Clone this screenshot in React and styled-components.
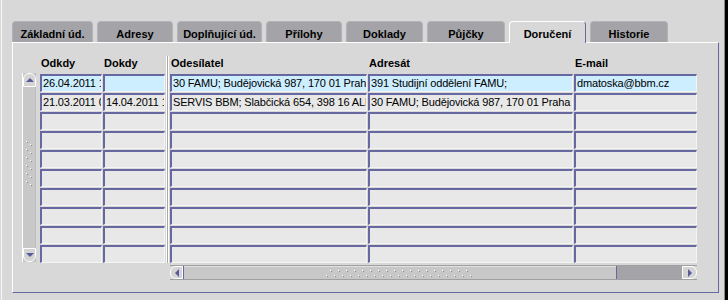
import React from 'react';
import styled, { createGlobalStyle, css } from 'styled-components';

// palette taken from the Oracle-forms style screen
const BG = '#d8d8d8';
const PURPLE = '#6868a0';
const FIELD = '#e8e8e8';
const CURRENT = '#cceeff';
const TAB_OFF = '#a4a4a8';

const GlobalStyle = createGlobalStyle`
  html, body {
    margin: 0;
    padding: 0;
    background: ${BG};
  }
  body {
    font-family: 'Liberation Sans', Arial, sans-serif;
    color: #000;
  }
`;

const Frame = styled.div`
  width: 728px;
  height: 300px;
  box-sizing: border-box;
  padding: 21px 0 0 12px;
  background: ${BG};
  overflow: hidden;
  box-shadow: inset 1px 0 0 ${BG}, inset 2px 0 0 #f8f8f8, inset -3px 0 0 #000,
    inset -4px 0 0 #8a8a8a;
`;

const TabBar = styled.div`
  display: flex;
  align-items: flex-start;
  gap: 4px;
  height: 21px;
`;

const Tab = styled.div`
  width: ${(p) => p.$w}px;
  height: 21px;
  box-sizing: border-box;
  display: flex;
  align-items: center;
  justify-content: center;
  padding-top: 3px;
  font-size: 11px;
  font-weight: bold;
  white-space: nowrap;
  background: ${TAB_OFF};
  border: 1px solid #b4b4b8;
  border-bottom: none;
  border-radius: 4px 4px 0 0;

  ${(p) =>
    p.$active &&
    css`
      position: relative;
      z-index: 1;
      height: 22px;
      margin-bottom: -1px;
      background: ${BG};
      border-top: 1px solid #fff;
      border-left: 1px solid #fff;
      border-right: 1px solid ${PURPLE};
    `}
`;

const Panel = styled.div`
  width: 707px;
  height: 251px;
  box-sizing: border-box;
  border-top: 1px solid #fff;
  border-left: 1px solid #fff;
  border-right: 1px solid ${PURPLE};
  border-bottom: 1px solid ${PURPLE};
  padding: 13px 0 0 9px;
  display: flex;
  align-items: flex-start;
`;

const VScroll = styled.div`
  width: 14px;
  height: 189px;
  margin-top: 17px;
  box-sizing: border-box;
  display: flex;
  flex-direction: column;
  background: #c8c8c8;
  border-left: 1px solid #fff;
  border-right: 1px solid #bcbcbc;
`;

const ScrollBtn = styled.div`
  flex: 0 0 auto;
  width: ${(p) => (p.$horizontal ? p.$size : 13)}px;
  height: ${(p) => (p.$horizontal ? 13 : p.$size)}px;
  box-sizing: border-box;
  display: flex;
  align-items: center;
  justify-content: center;
  background: #d4d4d4;
  border: 1px solid #fff;
  border-radius: ${(p) => p.$radius};
`;

const VTrack = styled.div`
  flex: 1;
  display: flex;
  align-items: center;
  justify-content: center;
  padding-bottom: 8px;
`;

const Block = styled.div`
  display: flex;
  flex-direction: column;
  margin-left: ${(p) => p.$offset || 0}px;
`;

const HeaderRow = styled.div`
  display: flex;
  height: 18px;
`;

const HeaderCell = styled.div`
  width: ${(p) => p.$w}px;
  margin-left: ${(p) => p.$gap || 0}px;
  padding-left: 1px;
  box-sizing: border-box;
  font-size: 11px;
  font-weight: bold;
  line-height: 14px;
  white-space: nowrap;
`;

const Row = styled.div`
  display: flex;
  height: 18px;
  margin-bottom: 1px;
`;

const Cell = styled.div`
  width: ${(p) => p.$w}px;
  margin-left: ${(p) => p.$gap || 0}px;
  height: 18px;
  box-sizing: border-box;
  padding-left: 1px;
  border-top: 2px solid ${PURPLE};
  border-left: 2px solid ${PURPLE};
  border-right: 1px solid #f4f4f4;
  border-bottom: 1px solid #f4f4f4;
  background: ${(p) => (p.$current ? CURRENT : FIELD)};
  font-size: 11px;
  letter-spacing: -0.15px;
  line-height: 15px;
  white-space: nowrap;
  overflow: hidden;
`;

const Divider = styled.div`
  width: 5px;
  height: 207px;
  background: linear-gradient(
    to right,
    transparent 0 1px,
    #fff 1px 2px,
    #a8a8a8 2px 3px,
    #fff 3px 4px,
    transparent 4px
  );
`;

const HScroll = styled.div`
  margin-top: 1px;
  height: 15px;
  box-sizing: border-box;
  display: flex;
  border-top: 1px solid #a0a0a0;
  border-bottom: 1px solid #a0a0a0;
`;

const Thumb = styled.div`
  width: 434px;
  box-sizing: border-box;
  display: flex;
  align-items: center;
  justify-content: center;
  background: #c8c8c8;
  border-left: 1px solid ${PURPLE};
  border-right: 1px solid ${PURPLE};
  box-shadow: inset 0 1px 0 #e0e0e0;
`;

const HTrack = styled.div`
  flex: 1;
  background: ${TAB_OFF};
`;

const tabs = [
  { label: 'Základní úd.', w: 81 },
  { label: 'Adresy', w: 76 },
  { label: 'Doplňující úd.', w: 85 },
  { label: 'Přílohy', w: 76 },
  { label: 'Doklady', w: 77 },
  { label: 'Půjčky', w: 78 },
  { label: 'Doručení', w: 77, active: true },
  { label: 'Historie', w: 78 },
];

const leftCols = [
  { key: 'from', label: 'Odkdy', w: 62 },
  { key: 'to', label: 'Dokdy', w: 62, gap: 1 },
];

const rightCols = [
  { key: 'sender', label: 'Odesílatel', w: 197 },
  { key: 'recipient', label: 'Adresát', w: 205, gap: 1 },
  { key: 'email', label: 'E-mail', w: 123, gap: 1 },
];

const records = [
  {
    from: '26.04.2011 10:32',
    to: '',
    sender: '30 FAMU; Budějovická 987, 170 01 Praha 4',
    recipient: '391 Studijní oddělení FAMU;',
    email: 'dmatoska@bbm.cz',
  },
  {
    from: '21.03.2011 09:15',
    to: '14.04.2011 12:00',
    sender: 'SERVIS BBM; Slabčická 654, 398 16 ALBRECHTICE',
    recipient: '30 FAMU; Budějovická 987, 170 01 Praha',
    email: '',
  },
];

const ROWS = 10;
const rows = Array.from({ length: ROWS }, (_, i) => records[i] || {});

const Arrow = ({ dir }) => {
  const points = {
    up: '1,6 5,2 9,6',
    down: '1,2 5,6 9,2',
    left: '6,1 2,5 6,9',
    right: '2,1 6,5 2,9',
  }[dir];
  const vertical = dir === 'up' || dir === 'down';
  return (
    <svg width={vertical ? 10 : 8} height={vertical ? 8 : 10} viewBox={vertical ? '0 0 10 8' : '0 0 8 10'}>
      <polygon points={points} fill="#5a5a9a" />
    </svg>
  );
};

const Dot = ({ x, y }) => (
  <>
    <rect x={x + 1} y={y + 1} width="1" height="1" fill="#8c8c8c" />
    <rect x={x} y={y} width="1" height="1" fill="#fff" />
  </>
);

const HGrip = () => (
  <svg width="148" height="10">
    {Array.from({ length: 18 }, (_, k) => (
      <Dot key={'a' + k} x={4 + k * 8} y={2} />
    ))}
    {Array.from({ length: 19 }, (_, k) => (
      <Dot key={'b' + k} x={k * 8} y={7} />
    ))}
  </svg>
);

const VGrip = () => (
  <svg width="8" height="46">
    {Array.from({ length: 6 }, (_, k) => (
      <Dot key={'a' + k} x={1} y={k * 8} />
    ))}
    {Array.from({ length: 6 }, (_, k) => (
      <Dot key={'b' + k} x={5} y={3 + k * 8} />
    ))}
  </svg>
);

const Columns = ({ cols }) => (
  <>
    <HeaderRow>
      {cols.map((c) => (
        <HeaderCell key={c.key} $w={c.w} $gap={c.gap}>
          {c.label}
        </HeaderCell>
      ))}
    </HeaderRow>
    {rows.map((r, i) => (
      <Row key={i}>
        {cols.map((c) => (
          <Cell key={c.key} $w={c.w} $gap={c.gap} $current={i === 0}>
            {r[c.key]}
          </Cell>
        ))}
      </Row>
    ))}
  </>
);

export default function App() {
  return (
    <>
      <GlobalStyle />
      <Frame>
        <TabBar>
          {tabs.map((t) => (
            <Tab key={t.label} $w={t.w} $active={t.active}>
              {t.label}
            </Tab>
          ))}
        </TabBar>
        <Panel>
          <VScroll>
            <ScrollBtn $size={14} $radius="6px 6px 0 0">
              <Arrow dir="up" />
            </ScrollBtn>
            <VTrack>
              <VGrip />
            </VTrack>
            <ScrollBtn $size={14} $radius="0 0 6px 6px">
              <Arrow dir="down" />
            </ScrollBtn>
          </VScroll>
          <Block $offset={4}>
            <Columns cols={leftCols} />
          </Block>
          <Divider />
          <Block>
            <Columns cols={rightCols} />
            <HScroll>
              <ScrollBtn $horizontal $size={13} $radius="6px 0 0 6px">
                <Arrow dir="left" />
              </ScrollBtn>
              <Thumb>
                <HGrip />
              </Thumb>
              <HTrack />
              <ScrollBtn $horizontal $size={15} $radius="0 6px 6px 0">
                <Arrow dir="right" />
              </ScrollBtn>
            </HScroll>
          </Block>
        </Panel>
      </Frame>
    </>
  );
}
